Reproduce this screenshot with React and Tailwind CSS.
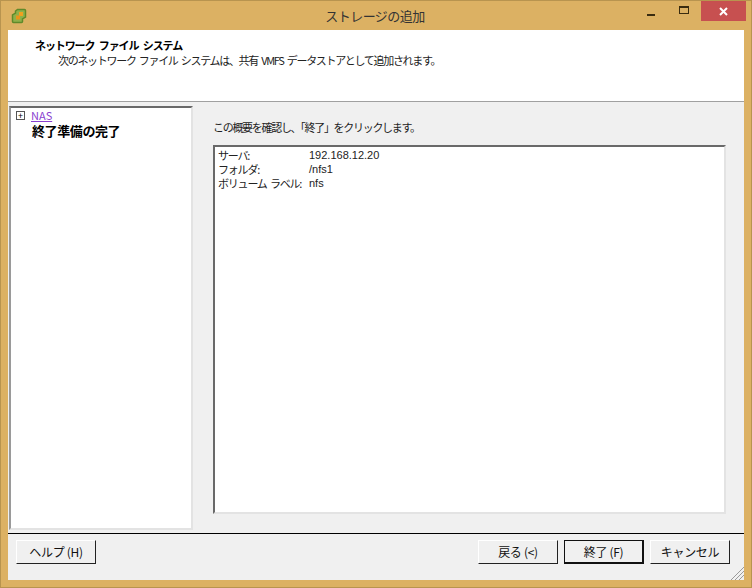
import React from "react";

const jp = "font-['Noto_Sans_CJK_JP','Liberation_Sans',sans-serif]";

// legacy raised windows button
const DialogButton = ({ label, isDefault }) => {
  return (
    <button
      className={`w-[80px] h-[24px] flex items-center justify-center text-[12px] tracking-[-0.3px] leading-none text-[#111] bg-[#f0f0f0] border ${
        isDefault
          ? "border-[#111] border-r-2 border-b-2"
          : "border-t-white border-l-white border-r-[#222] border-b-[#222]"
      }`}
    >
      {label}
    </button>
  );
};

const AppLogo = () => (
  <svg width="16" height="16" viewBox="0 0 16 16" fill="none">
    <path
      d="M6.500 1.500h7a1 1 0 0 1 1 1V9l-3 2v2.500a1 1 0 0 1-1 1H2.500a1 1 0 0 1-1-1V7l3-2V3z"
      fill="#8fb04a"
      stroke="#5f8a2a"
      strokeWidth="1.500"
    />
    <rect x="8" y="4" width="4" height="4" fill="#f0a020" />
    <rect x="5" y="7.500" width="4" height="4" fill="#e8941a" />
  </svg>
);

const App = () => {
  const summary = [
    ["サーバ:", "192.168.12.20"],
    ["フォルダ:", "/nfs1"],
    ["ボリューム ラベル:", "nfs"],
  ];

  return (
    <div
      className={`${jp} w-[752px] h-[588px] flex flex-col bg-[#dcb163] border border-[#b8944f] overflow-hidden`}
    >
      {/* title bar */}
      <header className="h-[29px] shrink-0 flex items-center">
        <div className="w-[35px] pl-[10px] shrink-0">
          <AppLogo />
        </div>
        <h1 className="flex-1 text-center text-[13px] tracking-[-0.5px] text-[#333] pt-[1px] pl-[79px]">
          ストレージの追加
        </h1>
        <div className="flex items-start self-start shrink-0 mr-[5px]">
          <div className="w-[32px] h-[20px] flex items-center justify-center">
            <div className="w-[8px] h-[2px] bg-[#3a2c10] mt-[7px]" />
          </div>
          <div className="w-[34px] h-[20px] flex items-center justify-center">
            <div className="w-[10px] h-[8px] border border-t-2 border-[#3a2c10] mt-[-3px]" />
          </div>
          <div className="w-[45px] h-[20px] bg-[#c75050] flex items-center justify-center text-white">
            <svg width="9" height="9" viewBox="0 0 9 9">
              <path d="M1 1l7 7M8 1l-7 7" stroke="#fff" strokeWidth="2" />
            </svg>
          </div>
        </div>
      </header>

      {/* dialog */}
      <div className="flex-1 mx-[7px] mb-[7px] flex flex-col bg-[#f0f0f0] min-h-0">
        <section className="h-[72px] shrink-0 bg-white border-b border-[#a0a0a0] pl-[27px] pt-[8px]">
          <h2 className="text-[11px] tracking-[-1.1px] [word-spacing:3px] leading-[15px] font-bold text-black">
            ネットワーク ファイル システム
          </h2>
          <p className="text-[11px] tracking-[-1.3px] [word-spacing:2px] leading-[15px] text-[#222] pl-[23px]">
            次のネットワーク ファイル システムは、共有 VMFS データストアとして追加されます。
          </p>
        </section>

        <main className="flex-1 flex min-h-0 pt-[4px] pb-[3px] pl-[1px]">
          {/* wizard steps */}
          <nav className="w-[184px] shrink-0 bg-white border-2 border-t-[#696969] border-l-[#9a9a9a] border-r-[#e3e3e3] border-b-[#e3e3e3] pl-[5px]">
            <div className="flex items-center h-[15px]">
              <span className="w-[9px] h-[9px] border border-[#555] flex items-center justify-center text-[9px] leading-none text-black mr-[6px]">
                +
              </span>
              <a className="text-[11px] leading-none text-[#8a3fd0] underline">NAS</a>
            </div>
            <div className="pl-[16px] text-[13px] tracking-[-0.4px] leading-[15px] font-bold text-black">
              終了準備の完了
            </div>
          </nav>

          <div className="flex-1 flex flex-col pl-[20px] pr-[18px] pb-[16px]">
            <p className="text-[11px] tracking-[-1.3px] leading-[14px] text-[#222] mt-[14px] mb-[11px]">
              この概要を確認し、「終了」をクリックします。
            </p>
            <div className="flex-1 bg-white border-2 border-t-[#696969] border-l-[#696969] border-r-[#e3e3e3] border-b-[#e3e3e3] pl-[3px] pt-[1px]">
              {summary.map(([key, value]) => (
                <div key={key} className="flex text-[11px] leading-[14px] text-[#222]">
                  <span className="w-[91px] shrink-0 whitespace-nowrap tracking-[-1.2px] [word-spacing:2px]">{key}</span>
                  <span className="font-['Liberation_Sans',sans-serif]">{value}</span>
                </div>
              ))}
            </div>
          </div>
        </main>

        {/* button row */}
        <footer className="h-[47px] shrink-0 border-t border-black flex items-start justify-between pt-[6px] pl-[8px] pr-[14px] relative">
          <DialogButton label="ヘルプ (H)" />
          <div className="flex gap-[6px]">
            <DialogButton label="戻る (<)" />
            <DialogButton label="終了 (F)" isDefault />
            <DialogButton label="キャンセル" />
          </div>
          <svg className="absolute right-0 bottom-0" width="14" height="14" viewBox="0 0 14 14">
            <path d="M14 1L1 14M14 5L5 14M14 9L9 14" stroke="#9a9a9a" strokeWidth="1" />
          </svg>
        </footer>
      </div>
    </div>
  );
};

export default App;
